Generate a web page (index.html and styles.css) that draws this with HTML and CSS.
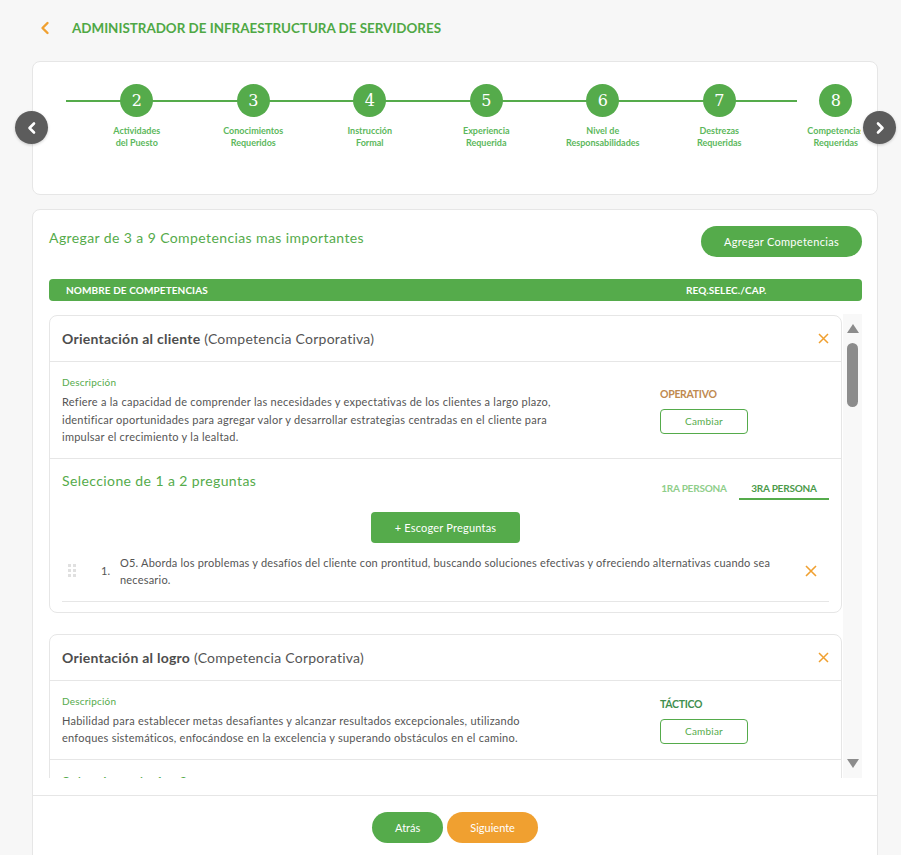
FILE: index.html
```html
<!DOCTYPE html>
<html lang="es">
<head>
	<meta charset="UTF-8">
	<title>Competencias Requeridas</title>
	<link rel="stylesheet" href="styles.css">
</head>
<body>
	<div class="top">
		<span class="back">
			<svg width="10" height="14" viewBox="0 0 10 14"><path d="M7.5 2 L2.5 7 L7.5 12" fill="none" stroke="#f0a030" stroke-width="2.4" stroke-linecap="round" stroke-linejoin="round"/></svg>
		</span>
		<h1 class="title">ADMINISTRADOR DE INFRAESTRUCTURA DE SERVIDORES</h1>
	</div>

	<div class="steps-wrap">
		<span class="nav-arrow prev">
			<svg width="14" height="14" viewBox="0 0 14 14"><path d="M9 2.5 L4.5 7 L9 11.5" fill="none" stroke="#fff" stroke-width="2.6" stroke-linecap="round" stroke-linejoin="round"/></svg>
		</span>
		<div class="steps-card">
			<div class="steps-view">
				<div class="steps-track">
					<div class="step"><span class="num">2</span><span class="lbl">Actividades<br>del Puesto</span></div>
					<div class="step"><span class="num">3</span><span class="lbl">Conocimientos<br>Requeridos</span></div>
					<div class="step"><span class="num">4</span><span class="lbl">Instrucción<br>Formal</span></div>
					<div class="step"><span class="num">5</span><span class="lbl">Experiencia<br>Requerida</span></div>
					<div class="step"><span class="num">6</span><span class="lbl">Nivel de<br>Responsabilidades</span></div>
					<div class="step"><span class="num">7</span><span class="lbl">Destrezas<br>Requeridas</span></div>
					<div class="step"><span class="num">8</span><span class="lbl">Competencias<br>Requeridas</span></div>
				</div>
			</div>
		</div>
		<span class="nav-arrow next">
			<svg width="14" height="14" viewBox="0 0 14 14"><path d="M5 2.5 L9.5 7 L5 11.5" fill="none" stroke="#fff" stroke-width="2.6" stroke-linecap="round" stroke-linejoin="round"/></svg>
		</span>
	</div>

	<div class="main-card">
		<div class="main-head">
			<p class="intro">Agregar de 3 a 9 Competencias mas importantes</p>
			<span class="btn-pill">Agregar Competencias</span>
		</div>
		<div class="table-head">
			<span>NOMBRE DE COMPETENCIAS</span>
			<span>REQ.SELEC./CAP.</span>
		</div>

		<div class="scroll-area">
			<div class="list">
				<div class="comp">
					<div class="comp-head">
						<p class="comp-name"><b>Orientación al cliente</b> (Competencia Corporativa)</p>
						<svg class="x" width="11" height="11" viewBox="0 0 11 11"><path d="M1 1 L10 10 M10 1 L1 10" stroke="#f0a030" stroke-width="1.5"/></svg>
					</div>
					<div class="comp-desc">
						<div>
							<p class="desc-lbl">Descripción</p>
							<p class="desc-txt">Refiere a la capacidad de comprender las necesidades y expectativas de los clientes a largo plazo, identificar oportunidades para agregar valor y desarrollar estrategias centradas en el cliente para impulsar el crecimiento y la lealtad.</p>
						</div>
						<div class="level">
							<p class="level-name operativo">OPERATIVO</p>
							<span class="btn-outline">Cambiar</span>
						</div>
					</div>
					<div class="questions">
						<div class="q-head">
							<p class="q-title">Seleccione de 1 a 2 preguntas</p>
							<div class="tabs">
								<span class="tab">1RA PERSONA</span>
								<span class="tab active">3RA PERSONA</span>
							</div>
						</div>
						<div class="q-action"><span class="btn-green">+ Escoger Preguntas</span></div>
						<div class="q-row">
							<span class="handle"><i></i><i></i><i></i><i></i><i></i><i></i></span>
							<span class="q-num">1.</span>
							<p class="q-text">O5. Aborda los problemas y desafíos del cliente con prontitud, buscando soluciones efectivas y ofreciendo alternativas cuando sea necesario.</p>
							<svg class="x" width="12" height="12" viewBox="0 0 12 12"><path d="M1 1 L11 11 M11 1 L1 11" stroke="#f0a030" stroke-width="1.6"/></svg>
						</div>
					</div>
				</div>

				<div class="comp">
					<div class="comp-head">
						<p class="comp-name"><b>Orientación al logro</b> (Competencia Corporativa)</p>
						<svg class="x" width="11" height="11" viewBox="0 0 11 11"><path d="M1 1 L10 10 M10 1 L1 10" stroke="#f0a030" stroke-width="1.5"/></svg>
					</div>
					<div class="comp-desc">
						<div>
							<p class="desc-lbl">Descripción</p>
							<p class="desc-txt">Habilidad para establecer metas desafiantes y alcanzar resultados excepcionales, utilizando enfoques sistemáticos, enfocándose en la excelencia y superando obstáculos en el camino.</p>
						</div>
						<div class="level">
							<p class="level-name tactico">TÁCTICO</p>
							<span class="btn-outline">Cambiar</span>
						</div>
					</div>
					<div class="questions">
						<div class="q-head">
							<p class="q-title">Seleccione de 1 a 2 preguntas</p>
						</div>
					</div>
				</div>
			</div>
			<div class="scrollbar">
				<span class="sb-up"></span>
				<span class="sb-thumb"></span>
				<span class="sb-down"></span>
			</div>
		</div>

		<div class="footer">
			<span class="btn-pill">Atrás</span>
			<span class="btn-pill orange">Siguiente</span>
		</div>
	</div>
</body>
</html>
```

FILE: styles.css
```css
*{
	margin: 0;
	padding: 0;
	box-sizing: border-box;
}
body{
	background: #f7f7f7;
	font-family: Lato, "Open Sans", sans-serif;
	color: #555;
	width: 901px;
	height: 855px;
	overflow: hidden;
}
.top{
	display: flex;
	align-items: center;
	height: 56px;
	padding-left: 40px;
	gap: 22px;
	margin-bottom: 5px;
}
.back{
	display: flex;
}
.title{
	font-size: 13.4px;
	font-weight: 700;
	color: #4fa845;
}

/* stepper */
.steps-wrap{
	position: relative;
	margin: 0 23px 0 32px;
}
.steps-card{
	background: #fff;
	border: 1px solid #e6e6e6;
	border-radius: 8px;
	height: 134px;
	padding: 22px 16px 0 33px;
}
.steps-view{
	overflow: hidden;
}
.steps-track{
	position: relative;
	display: flex;
	padding-left: 12.5px;
}
.steps-track::before{
	content: "";
	position: absolute;
	left: 0;
	top: 16px;
	width: 731px;
	height: 1.5px;
	background: #55ab4b;
}
.step{
	position: relative;
	flex: 0 0 116.5px;
	display: flex;
	flex-direction: column;
	align-items: center;
}
.num{
	width: 33px;
	height: 33px;
	border-radius: 50%;
	background: #55ab4b;
	color: #fff;
	font-family: "DejaVu Serif", serif;
	font-size: 16px;
	line-height: 33px;
	text-align: center;
}
.lbl{
	margin-top: 8px;
	font-size: 9px;
	font-weight: 700;
	line-height: 12px;
	color: #5cb85c;
	text-align: center;
	white-space: nowrap;
}
.nav-arrow{
	position: absolute;
	top: 50px;
	width: 33px;
	height: 33px;
	border-radius: 50%;
	background: #5c5c5c;
	display: flex;
	align-items: center;
	justify-content: center;
	box-shadow: 0 1px 3px rgba(0,0,0,0.2);
	z-index: 2;
}
.nav-arrow.prev{
	left: -17px;
}
.nav-arrow.next{
	right: -18px;
}

/* main card */
.main-card{
	margin: 14px 23px 0 32px;
	background: #fff;
	border: 1px solid #e6e6e6;
	border-radius: 8px;
	padding: 16px 15px 0 16px;
	height: 660px;
}
.main-head{
	display: flex;
	justify-content: space-between;
	align-items: center;
}
.intro{
	font-size: 14px;
	letter-spacing: 0.4px;
	color: #55ab4b;
	margin-top: -8px;
}
.btn-pill{
	display: inline-block;
	height: 31px;
	line-height: 31px;
	padding: 0 23px;
	border-radius: 16px;
	background: #55ab4b;
	color: #fff;
	font-size: 11px;
}
.main-head .btn-pill{
	letter-spacing: 0.3px;
}
.btn-pill.orange{
	background: #f0a030;
}
.table-head{
	margin-top: 22px;
	height: 22px;
	border-radius: 4px;
	background: #55ab4b;
	color: #fff;
	font-size: 10px;
	font-weight: 700;
	line-height: 22px;
	display: grid;
	grid-template-columns: 620px auto;
	padding-left: 17px;
	letter-spacing: 0.1px;
}
.scroll-area{
	margin-top: 13px;
	height: 464px;
	display: flex;
	gap: 1px;
}
.list{
	flex: 1;
	overflow: hidden;
	padding-top: 1px;
}
.comp{
	border: 1px solid #e6e6e6;
	border-radius: 8px;
	margin-bottom: 21px;
	background: #fff;
}
.comp-head{
	height: 46px;
	border-bottom: 1px solid #e6e6e6;
	display: flex;
	align-items: center;
	justify-content: space-between;
	padding: 0 12px;
}
.comp-name{
	font-size: 14px;
	letter-spacing: 0.25px;
	color: #555;
}
.comp-name b{
	color: #4d4d4d;
}
.comp-desc{
	display: grid;
	grid-template-columns: 598px auto;
	align-items: center;
	padding: 13px 12px 12px;
	border-bottom: 1px solid #e6e6e6;
}
.desc-lbl{
	font-size: 10px;
	line-height: 14px;
	letter-spacing: 0.2px;
	color: #55ab4b;
}
.desc-txt{
	margin-top: 4px;
	max-width: 500px;
	font-size: 11px;
	letter-spacing: 0.25px;
	line-height: 17.5px;
	color: #555;
}
.level-name{
	font-size: 10.5px;
	font-weight: 700;
	line-height: 14px;
	letter-spacing: -0.3px;
}
.operativo{
	color: #c08a50;
}
.tactico{
	color: #3f8f4f;
}
.btn-outline{
	display: inline-block;
	margin-top: 8px;
	width: 88px;
	height: 25px;
	line-height: 23px;
	border: 1px solid #55ab4b;
	border-radius: 4px;
	color: #55ab4b;
	font-size: 10px;
	letter-spacing: 0.2px;
	text-align: center;
}
.questions{
	padding: 13px 12px 10px;
}
.q-head{
	display: flex;
	justify-content: space-between;
	align-items: flex-start;
}
.q-title{
	font-size: 14px;
	letter-spacing: 0.4px;
	line-height: 18px;
	color: #55ab4b;
}
.tabs{
	display: flex;
	margin-top: 9px;
}
.tab{
	width: 90px;
	text-align: center;
	font-size: 10px;
	font-weight: 700;
	line-height: 14px;
	padding-bottom: 3px;
	border-bottom: 2px solid transparent;
	color: #8fce8a;
	letter-spacing: -0.2px;
}
.tab.active{
	color: #4c9a4a;
	border-bottom-color: #55ab4b;
}
.q-action{
	display: flex;
	justify-content: center;
	margin-top: 12px;
}
.btn-green{
	display: inline-block;
	height: 31px;
	line-height: 31px;
	padding: 0 24px;
	border-radius: 4px;
	background: #55ab4b;
	color: #fff;
	font-size: 11px;
	letter-spacing: 0.2px;
}
.q-row{
	display: flex;
	align-items: center;
	margin-top: 11px;
	padding-bottom: 13px;
	border-bottom: 1px solid #e6e6e6;
}
.handle{
	display: grid;
	grid-template-columns: 3px 3px;
	gap: 2px 2px;
	margin-left: 6px;
	width: 8px;
}
.handle i{
	width: 3px;
	height: 3px;
	background: #e0e0e0;
}
.q-num{
	margin-left: 25px;
	width: 19px;
	font-size: 11px;
}
.q-text{
	flex: 1;
	font-size: 11px;
	letter-spacing: 0.2px;
	line-height: 17px;
	padding-right: 16px;
}
.q-row .x{
	margin-right: 12px;
}

/* fake scrollbar */
.scrollbar{
	width: 19px;
	background: #f8f8f8;
	display: flex;
	flex-direction: column;
	align-items: center;
	padding-top: 10px;
}
.sb-up{
	width: 0;
	height: 0;
	border-left: 6px solid transparent;
	border-right: 6px solid transparent;
	border-bottom: 9px solid #8c8c8c;
}
.sb-thumb{
	margin-top: 10px;
	width: 11px;
	height: 64px;
	border-radius: 6px;
	background: #8c8c8c;
}
.sb-down{
	margin-top: auto;
	margin-bottom: 10px;
	width: 0;
	height: 0;
	border-left: 6px solid transparent;
	border-right: 6px solid transparent;
	border-top: 9px solid #8c8c8c;
}
.footer{
	margin: 17px -15px 0 -16px;
	border-top: 1px solid #e6e6e6;
	padding-top: 16px;
	display: flex;
	justify-content: center;
	gap: 4px;
}
```
